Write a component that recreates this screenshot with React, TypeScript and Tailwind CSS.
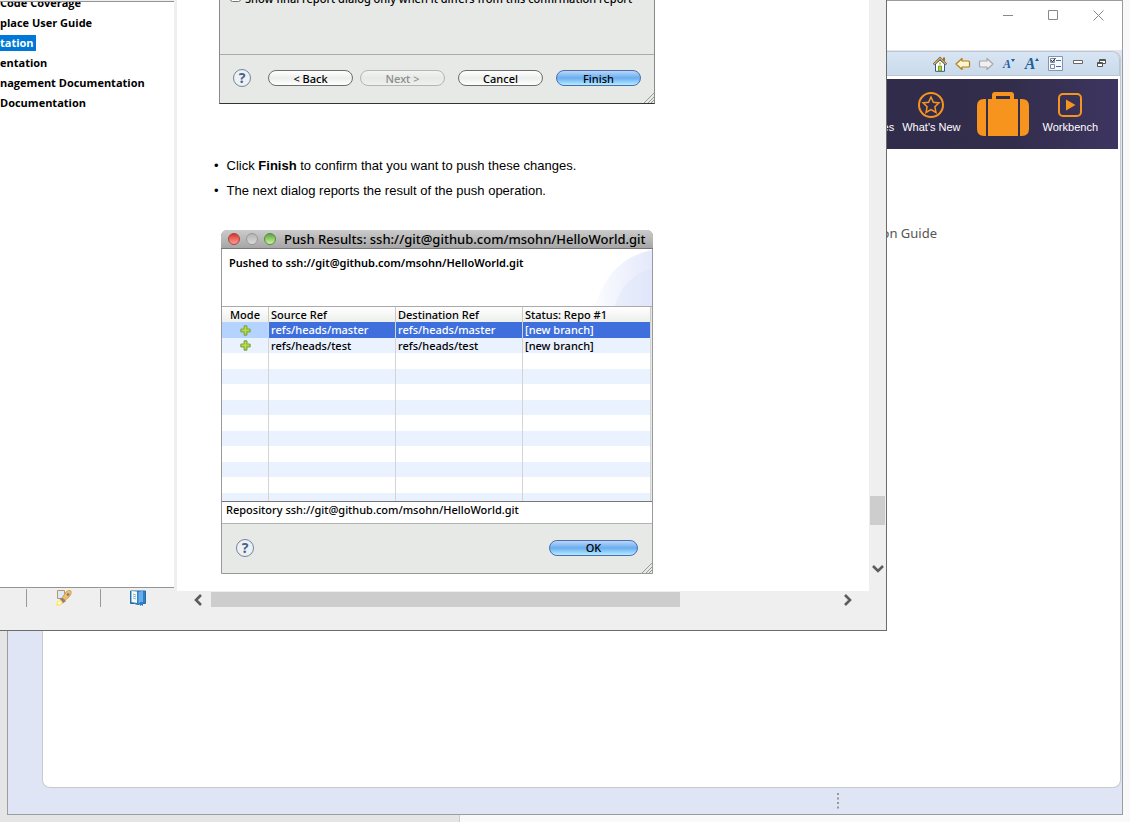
import React from "react";

const treeItems = [
  { label: "Code Coverage", selected: false },
  { label: "place User Guide", selected: false },
  { label: "tation", selected: true },
  { label: "entation", selected: false },
  { label: "nagement Documentation", selected: false },
  { label: "Documentation", selected: false },
];

function HelpButton() {
  return (
    <button type="button" aria-label="Help" className="flex h-[18px] w-[18px] items-center justify-center rounded-full border border-[#7085a0] bg-[#eef1f3] text-sm leading-none font-bold text-[#48628a]">
      ?
    </button>
  );
}

function MacButton({ label, kind }: { label: string; kind: "plain" | "disabled" | "primary" }) {
  const base = "flex h-4 items-center justify-center rounded-full border text-[11px] leading-none font-medium";
  const look =
    kind === "primary"
      ? "border-[#4c6db0] bg-linear-to-b from-[#b9d7f8] via-[#69adf0] to-[#b4ecff] text-black"
      : kind === "disabled"
        ? "border-[#b4b6b4] bg-linear-to-b from-[#f3f4f3] via-[#e6e9e6] to-[#eff1ef] text-[#8b8d8b]"
        : "border-[#6c6e6c] bg-linear-to-b from-white via-[#eceeec] to-white text-black";
  return (
    <button type="button" disabled={kind === "disabled"} className={base + " w-full " + look}>
      {label}
    </button>
  );
}

function ResizeGrip() {
  return (
    <svg viewBox="0 0 10 10" className="h-[10px] w-[10px]" fill="none" stroke="#999" aria-hidden="true">
      <path d="M0 10 10 0M4 10l6-6M7 10l3-3" />
    </svg>
  );
}

function Chevron({ d }: { d: string }) {
  return (
    <svg viewBox="0 0 12 12" className="h-3 w-3" fill="none" stroke="#5c5c5c" strokeWidth="2.6" aria-hidden="true">
      <path d={d} />
    </svg>
  );
}

function Plus() {
  return (
    <svg viewBox="0 0 11 11" className="mx-auto block h-[11px] w-[11px]" aria-label="added">
      <path d="M4 .8h3V4h3.200v3H7v3.200H4V7H.8V4H4z" fill="#9ccb2b" stroke="#7fa552" strokeLinejoin="round" />
      <path d="M2 5.200h7M5.300 2v6.500" stroke="#c5e04a" />
    </svg>
  );
}

const iconButton = "flex h-5 w-5 items-center justify-center";

function Toolbar() {
  return (
    <div className="flex h-[25px] items-center justify-end rounded-tr-lg border-t border-r border-b border-[#bcc5d2] bg-linear-to-b from-[#d8e5f3] to-[#c9daeb] pr-2">
      <div className="flex items-center gap-[3px]">
        <button type="button" aria-label="Home" className={iconButton}>
          <svg viewBox="0 0 14 16" className="h-4 w-[14px]">
            <path d="M10 1.500h2v4l-2-2z" fill="#a56832" />
            <path d="M2.500 8v7.300h9V8L7 4z" fill="#fff" stroke="#315b88" />
            <path d="M.5 8.500 7 2l6.500 6.500" fill="none" stroke="#8c6a35" strokeWidth="2.200" />
            <path d="M1 8.300 7 2.300l6 6" fill="none" stroke="#ecd79a" strokeWidth=".9" />
            <path d="M5.500 10h3v5h-3z" fill="#b9d51f" stroke="#527b29" strokeWidth=".7" />
            <path d="M6 6.500h2v2H6z" fill="#b9d51f" />
          </svg>
        </button>
        <button type="button" aria-label="Back" className={iconButton}>
          <svg viewBox="0 0 16 14" className="h-[14px] w-4">
            <path d="M1 7 7 1.500V4h6.500q1 0 1 1v4q0 1-1 1H7v2.500z" fill="#fff6d2" stroke="#b97b10" strokeWidth="1.200" strokeLinejoin="round" />
          </svg>
        </button>
        <button type="button" aria-label="Forward" disabled className={iconButton}>
          <svg viewBox="0 0 16 14" className="h-[14px] w-4">
            <path d="M15 7 9 1.500V4H2.500q-1 0-1 1v4q0 1 1 1H9v2.500z" fill="#f0f0f0" stroke="#a7a7a7" strokeWidth="1.200" strokeLinejoin="round" />
          </svg>
        </button>
        <button type="button" aria-label="Decrease font size" className="flex h-5 w-5 items-center justify-center font-['Liberation_Serif',serif] text-xs font-bold text-[#235f9b] italic">
          A<svg viewBox="0 0 4 3" className="mb-1.5 h-[3px] w-1"><path d="M0 0h4L2 3z" fill="#235f9b" /></svg>
        </button>
        <button type="button" aria-label="Increase font size" className="flex h-5 w-5 items-center justify-center font-['Liberation_Serif',serif] text-base font-bold text-[#235f9b] italic">
          A<svg viewBox="0 0 4 3" className="mb-2 h-[3px] w-1"><path d="M0 3h4L2 0z" fill="#235f9b" /></svg>
        </button>
        <button type="button" aria-label="Show as list" className={iconButton}>
          <svg viewBox="0 0 15 15" className="h-[15px] w-[15px]" fill="none">
            <path d="M.5.5h14v14H.5z" fill="#f7fbff" stroke="#8196b5" />
            <path d="M2.500 2.500h4v4h-4zM2.500 8.500h4v4h-4z" stroke="#7c8ba3" />
            <path d="m3 4 1.500 2 3-4" stroke="#222" />
            <path d="M8 4.500h5M8 10.500h5" stroke="#3d6ca8" />
          </svg>
        </button>
        <button type="button" aria-label="Minimize" className={iconButton}>
          <svg viewBox="0 0 10 10" className="h-[10px] w-[10px]"><path d="M.5 1.500h9v3h-9z" fill="#fff" stroke="#666" /></svg>
        </button>
        <button type="button" aria-label="Restore" className={iconButton}>
          <svg viewBox="0 0 9 9" className="h-[9px] w-[9px]" fill="#fff" stroke="#555">
            <path d="M2.500.5h6v4h-6zM2.500 1.500h6" /><path d="M.5 3.500h5v4h-5zM.5 4.500h5" />
          </svg>
        </button>
      </div>
    </div>
  );
}

function Banner() {
  return (
    <div className="mt-[3px] mr-0.5 flex h-[70px] items-center justify-end bg-linear-to-r from-[#2d2848] from-50% via-[#332d4c] via-90% to-[#3d3560] pr-5 pb-1 font-['Liberation_Sans',sans-serif] text-[11px] leading-3 text-white">
      <a href="#samples" className="mt-[29px] mr-2">Samples</a>
      <a href="#whats-new" className="flex flex-col items-center gap-[3px]">
        <svg viewBox="0 0 26 26" className="h-[26px] w-[26px]" fill="none" stroke="#f7941e">
          <circle cx="13" cy="13" r="12" strokeWidth="2" />
          <path d="m13 5 2.400 5.200 5.600.7-4.100 3.900 1.100 5.700-5-2.800-5 2.800 1.100-5.700L5 10.900l5.600-.7z" strokeWidth="1.500" />
        </svg>
        What's New
      </a>
      <svg viewBox="0 0 52 45" className="mt-1 mr-[14px] ml-4 h-[45px] w-[52px]" fill="#f7941e" aria-label="Welcome">
        <path d="M15 8V3q0-3 3-3h16q3 0 3 3v5h-4V4H19v4z" />
        <path d="M7 7h2v37H7q-7 0-7-7V14q0-7 7-7zM11 7h30v37H11zM43 7h2q7 0 7 7v23q0 7-7 7h-2z" />
      </svg>
      <a href="#workbench" className="flex flex-col items-center gap-[3px]">
        <svg viewBox="0 0 26 26" className="h-[26px] w-[26px]">
          <rect x="2" y="2" width="22" height="22" rx="4" fill="none" stroke="#f7941e" strokeWidth="2" />
          <path d="m9 7.500 9.500 5.500L9 18.500z" fill="#f7941e" />
        </svg>
        Workbench
      </a>
    </div>
  );
}

function WorkbenchWindow() {
  return (
    <section aria-label="Workbench" className="absolute inset-x-[7px] top-0 bottom-[7px] flex flex-col border border-[#999ca3] bg-[#dfe5f5]">
      <header className="flex h-[50px] items-start justify-end border-b border-[#e5e5ea] bg-white pt-[6px] pr-[15px]">
        <div className="flex gap-[27px]">
          <button type="button" aria-label="Minimize window" className="flex h-4 w-[18px] items-center justify-center"><svg viewBox="0 0 10 11" className="h-[11px] w-[10px]" stroke="#888"><path d="M0 5.500h10" /></svg></button>
          <button type="button" aria-label="Maximize window" className="flex h-4 w-[18px] items-center justify-center"><svg viewBox="0 0 10 10" className="h-[10px] w-[10px]" fill="none" stroke="#888"><path d="M.5.5h9v9h-9z" /></svg></button>
          <button type="button" aria-label="Close window" className="flex h-4 w-[18px] items-center justify-center"><svg viewBox="0 0 11 11" className="h-[11px] w-[11px]" stroke="#888"><path d="m.5.5 10 10m0-10-10 10" /></svg></button>
        </div>
      </header>
      <main className="mr-px ml-[34px] flex flex-1 flex-col rounded-lg border border-t-0 border-[#c8c9cc] bg-white">
        <Toolbar />
        <Banner />
        <div className="flex justify-end pt-[76px] pr-[183px] font-['Noto_Sans',sans-serif] text-[13px] leading-4 text-[#555]">Workbench Migration Guide</div>
      </main>
      <footer className="flex h-[26px] items-center justify-end pr-[282px]">
        <svg viewBox="0 0 4 18" className="h-[18px] w-1" stroke="#9a9690" strokeWidth="2" strokeDasharray="2 2.500"><path d="M2 1v17" /></svg>
      </footer>
    </section>
  );
}

function ConfirmationDialog() {
  return (
    <div className="ml-[42px] flex h-[104px] w-[436px] flex-col border-x border-b border-x-[#8a8a8a] border-b-[#333] bg-[#e7e9e6]">
      <label className="-mt-[9px] flex h-[63px] items-start gap-1 pl-[10px] text-[11px] leading-4 font-medium">
        <input type="checkbox" className="mt-0 h-[11px] w-[11px]" />
        Show final report dialog only when it differs from this confirmation report
      </label>
      <div className="relative flex flex-1 items-center border-t border-[#a9aba9] pb-0.5 pl-[13px]">
        <HelpButton />
        <div className="ml-[17px] flex flex-1 gap-[7px] pr-[13px]">
          <div className="w-[85px]"><MacButton label="&lt; Back" kind="plain" /></div>
          <div className="w-[85px]"><MacButton label="Next &gt;" kind="disabled" /></div>
          <div className="ml-[6px] w-[85px]"><MacButton label="Cancel" kind="plain" /></div>
          <div className="ml-[6px] w-[85px]"><MacButton label="Finish" kind="primary" /></div>
        </div>
        <span className="absolute right-0 bottom-0"><ResizeGrip /></span>
      </div>
    </div>
  );
}

const refs = [
  { source: "refs/heads/master", dest: "refs/heads/master", status: "[new branch]" },
  { source: "refs/heads/test", dest: "refs/heads/test", status: "[new branch]" },
];
const blankRows = [1, 2, 3, 4, 5, 6, 7, 8, 9, 10];

function RefTable() {
  return (
    <div className="h-[194px] overflow-hidden pr-px">
      <table className="w-full table-fixed border-separate border-spacing-0 text-left text-[11px] leading-[15px] font-medium">
        <colgroup><col className="w-[47px]" /><col className="w-[127px]" /><col className="w-[127px]" /><col /></colgroup>
        <thead>
          <tr className="h-[15px] bg-linear-to-b from-white to-[#ecefec] leading-[14px]">
            <th className="border-r border-[#c9cbc9] p-0 pt-px text-center font-medium">Mode</th>
            <th className="border-r border-[#c9cbc9] p-0 pt-px pl-0.5 font-medium">Source Ref</th>
            <th className="border-r border-[#c9cbc9] p-0 pt-px pl-0.5 font-medium">Destination Ref</th>
            <th className="border-r border-[#c9cbc9] p-0 pt-px pl-0.5 font-medium">Status: Repo #1</th>
          </tr>
        </thead>
        <tbody>
          {refs.map((r, i) => (
            <tr key={r.source} className={i === 0 ? "h-4 bg-[#3e6fdd] leading-4 text-white" : "h-[15px] bg-[#ebf2ff]"}>
              <td className={i === 0 ? "border-r border-[#d3d5d3] bg-[#b4d4ff] p-0" : "border-r border-[#d3d5d3] p-0"}><Plus /></td>
              <td className="border-r border-[#d3d5d3] p-0 pl-0.5">{r.source}</td>
              <td className="border-r border-[#d3d5d3] p-0 pl-0.5">{r.dest}</td>
              <td className="border-r border-[#d3d5d3] p-0 pl-0.5">{r.status}</td>
            </tr>
          ))}
          {blankRows.map((n) => (
            <tr key={n} className={n % 2 ? "h-4 bg-white" : "h-[15px] bg-[#ebf2ff]"}>
              <td className="border-r border-[#d3d5d3] p-0" /><td className="border-r border-[#d3d5d3] p-0" /><td className="border-r border-[#d3d5d3] p-0" /><td className="border-r border-[#d3d5d3] p-0" />
            </tr>
          ))}
        </tbody>
      </table>
    </div>
  );
}

function TrafficLight({ label, tone }: { label: string; tone: string }) {
  return <button type="button" aria-label={label} className={"h-3 w-3 rounded-full border " + tone} />;
}

function PushResults() {
  return (
    <div className="flex h-[344px] w-[432px] flex-col rounded-t-md border border-[#999] bg-[#e7e9e6]">
      <header className="-mx-px -mt-px flex h-[19px] items-center rounded-t-md border-b border-[#777] bg-linear-to-b from-[#cbcbcb] to-[#a6a6a6] pl-[7px]">
        <div className="flex gap-1.5">
          <TrafficLight label="Close" tone="border-[#a34440] bg-linear-to-b from-[#d92f2c] to-[#ff9b91]" />
          <TrafficLight label="Minimize" tone="border-[#999] bg-linear-to-b from-[#b4b4b4] to-[#dadada]" />
          <TrafficLight label="Zoom" tone="border-[#578b42] bg-linear-to-b from-[#5aa63a] to-[#cff3a4]" />
        </div>
        <h2 className="ml-2 text-[13px] leading-4 font-medium whitespace-nowrap">Push Results: ssh://git@github.com/msohn/HelloWorld.git</h2>
      </header>
      <div className="flex h-[58px] items-start justify-between border-b border-[#aaa] bg-white pl-[7px]">
        <p className="pt-1.5 text-[11px] leading-4 font-semibold">Pushed to ssh://git@github.com/msohn/HelloWorld.git</p>
        <svg viewBox="0 0 60 57" className="h-[57px] w-[60px]" aria-hidden="true">
          <defs><linearGradient id="sweep"><stop stopColor="#fbfcff" /><stop offset="1" stopColor="#e4e9fb" /></linearGradient></defs>
          <path d="M3 57Q18 9 60 1v56z" fill="url(#sweep)" />
          <path d="M23 57Q31 27 60 20v37z" fill="#dce3f9" opacity=".4" />
        </svg>
      </div>
      <RefTable />
      <div className="h-[23px] border-y border-t-[#777] border-b-[#b3b5b3] bg-white pl-1 text-[11px] leading-4 font-medium">Repository ssh://git@github.com/msohn/HelloWorld.git</div>
      <div className="relative flex flex-1 items-center justify-between px-[14px] pb-0.5">
        <HelpButton />
        <div className="w-[89px]"><MacButton label="OK" kind="primary" /></div>
        <span className="absolute right-0 bottom-0"><ResizeGrip /></span>
      </div>
    </div>
  );
}

function RocketIcon() {
  return (
    <svg viewBox="0 0 16 16" className="h-4 w-4">
      <path d="M1.500.5h7v8h-7z" fill="#dce8fb" stroke="#b4985d" />
      <path d="m6 8 4-6q3-3 5-1 1 3-2 6l-5 4z" fill="#f3bd69" stroke="#d9a050" />
      <circle cx="12" cy="4.500" r="1.300" fill="#4e83b4" />
      <path d="M4 9q2-2 4 0l2 2-4 3z" fill="#928173" /><path d="m1 11 4-1 2 3-3 3H0z" fill="#ffe778" /><path d="M2 12h3l-2 3z" fill="#fff" />
    </svg>
  );
}

function BookIcon() {
  return (
    <svg viewBox="0 0 16 16" className="h-4 w-4">
      <path d="M.5 1h15v12.500h-4L8 14.500l-3.500-1h-4z" fill="#2f83bd" stroke="#276c9f" />
      <path d="M1.500 1 7 1.500V13l-5.500-1z" fill="#f5fbff" /><path d="m3 4 3 1m-3 1 3 1m-3 1 3 1" stroke="#9aafbd" />
      <path d="M8.500 2 13 .5V12l-4.500 1.500z" fill="#67acee" /><path d="M10 12h3v4l-1.500-1-1.500 1z" fill="#2e7cc9" />
    </svg>
  );
}

function HelpWindow() {
  return (
    <section aria-label="Help" className="absolute top-0 left-0 flex h-[631px] w-[887px] border-r border-b border-[#6b6b6b] bg-[#efefef]">
      <nav className="flex w-[174px] flex-col">
        <div className="h-px" />
        <ul className="flex h-[587px] flex-col items-start overflow-hidden border-y border-[#949494] bg-white font-['Open_Sans',sans-serif] text-[11px] font-bold">
          {treeItems.map((item, i) => (
            <li key={item.label} className={i === 0 ? "-mt-[9px] h-5 py-0.5 leading-4" : "h-5 py-0.5 leading-4"}>
              <a href="#topic" className={item.selected ? "block bg-[#0078d7] pr-0.5 text-white" : "block pr-0.5"}>{item.label}</a>
            </li>
          ))}
        </ul>
        <div className="flex pt-px">
          <div className="h-[18px] w-[27px] border-r border-[#999]" />
          <button type="button" aria-label="Index" className="flex h-[18px] w-[74px] items-center justify-center border-r border-[#999]"><RocketIcon /></button>
          <button type="button" aria-label="Contents" className="flex h-[18px] w-[73px] items-center justify-center"><BookIcon /></button>
        </div>
      </nav>
      <div className="ml-[3px] flex min-w-0 flex-1 flex-col">
        <div className="flex h-[591px]">
          <article className="flex-1 overflow-hidden bg-white">
            <ConfirmationDialog />
            <ul className="mt-[49px] ml-[37px] font-['Liberation_Sans',sans-serif] text-[13px] leading-[25px]">
              <li className="flex gap-2"><span>•</span><span>Click <b>Finish</b> to confirm that you want to push these changes.</span></li>
              <li className="flex gap-2"><span>•</span><span>The next dialog reports the result of the push operation.</span></li>
            </ul>
            <div className="mt-[27px] ml-[44px]"><PushResults /></div>
          </article>
          <div className="flex w-[17px] flex-col items-center justify-end pb-4">
            <div className="mb-[38px] h-[29px] w-[15px] bg-[#cdcdcd]" />
            <Chevron d="m1 3 5 5 5-5" />
          </div>
        </div>
        <div className="flex h-[17px] items-center pr-8 pl-[15px]">
          <Chevron d="M9 1 4 6l5 5" />
          <div className="mr-auto ml-[7px] h-[15px] w-[469px] bg-[#cdcdcd]" />
          <Chevron d="m3 1 5 5-5 5" />
        </div>
      </div>
    </section>
  );
}

export default function App() {
  return (
    <div className="relative flex min-h-screen w-full overflow-hidden bg-[#f9f9f9] font-['Noto_Sans',sans-serif] text-black">
      <div className="w-[460px] border-r border-[#ccc] bg-[#e5e5e5]" />
      <WorkbenchWindow />
      <HelpWindow />
    </div>
  );
}
